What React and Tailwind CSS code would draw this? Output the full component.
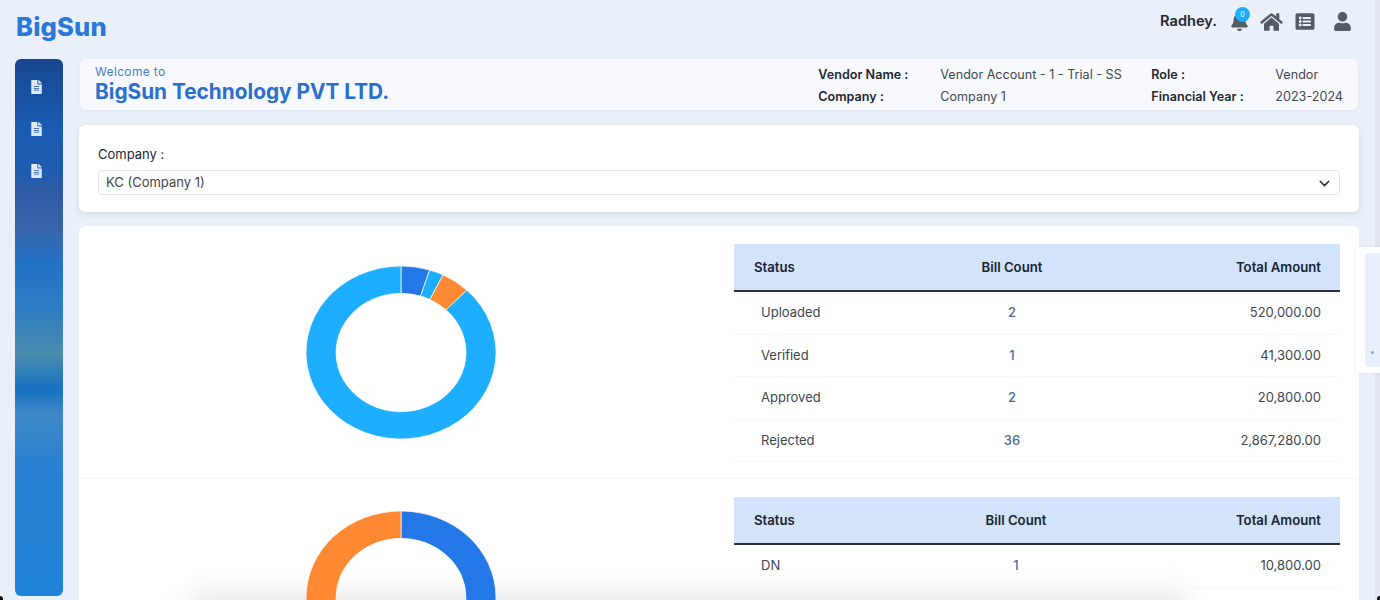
import React from 'react';
import { FaBell, FaHome, FaListAlt, FaUser, FaFileAlt } from 'react-icons/fa';
import { FiChevronDown } from 'react-icons/fi';

const arc = (start, end) => {
  const pt = (r, a) => {
    const t = (a * Math.PI) / 180;
    return `${(100 + r * Math.sin(t)).toFixed(2)} ${(100 - r * Math.cos(t)).toFixed(2)}`;
  };
  const large = end - start > 180 ? 1 : 0;
  return `M${pt(100, start)} A100 100 0 ${large} 1 ${pt(100, end)} L${pt(68.4, end)} A68.4 68.4 0 ${large} 0 ${pt(68.4, start)} Z`;
};

const Donut = ({ segments, className }) => (
  <svg viewBox="0 0 200 200" preserveAspectRatio="none" className={className}>
    {segments.map((s, i) => (
      <path key={i} d={arc(s[0], s[1])} fill={s[2]} stroke="#ffffff" strokeWidth="0.8" />
    ))}
  </svg>
);

const StatusTable = ({ rows, countWidth }) => (
  <div className="relative w-[606px] shrink-0">
    <div className="h-12 flex items-center pt-px bg-[#d2e3fb] border-b-2 border-[#2b3038] text-[13.2px] font-semibold text-[#1b2430]">
      <div className="w-[196px] pl-5">Status</div>
      <div className={`${countWidth} text-center`}>Bill Count</div>
      <div className="flex-1 text-right pr-[19px]">Total Amount</div>
    </div>
    {rows.map((r) => (
      <div key={r[0]} className="h-[42.5px] flex items-center border-b border-[#f5f6f8] text-[13px] text-[#41464d]">
        <div className="w-[196px] pl-[27px]">{r[0]}</div>
        <div className={`${countWidth} text-center font-medium text-[#4a6a9c]`}>{r[1]}</div>
        <div className="flex-1 text-right pr-[19px]">{r[2]}</div>
      </div>
    ))}
  </div>
);

const Info = ({ label, value, labelWidth }) => (
  <div className="flex text-[12.6px] leading-[22px]">
    <div className={`${labelWidth} font-semibold text-[#23272e]`}>{label}</div>
    <div className="text-[#43474e]">{value}</div>
  </div>
);

export default function App() {
  return (
    <div className="relative h-screen overflow-hidden bg-[#eaf0f9] font-['Inter',sans-serif]">
      <header className="relative h-[59px] flex items-start justify-between pl-4 pr-[28px]">
        <div className="mt-[10px] text-[25.5px] leading-[34px] font-extrabold text-[#2a78d8] tracking-[0.2px]">BigSun</div>
        <div className="mt-[11px] flex items-center text-[#555b64]">
          <span className="text-[14.6px] font-semibold text-[#23272e] mr-[13px]">Radhey.</span>
          <div className="relative mr-[11px]">
            <FaBell className="w-[19px] h-[19px]" />
            <span className="absolute -top-[5px] left-[5px] w-[15px] h-[15px] rounded-full bg-[#1eaeff] text-white text-[7px] flex items-center justify-center">0</span>
          </div>
          <FaHome className="w-[23px] h-[20px] mr-[12px]" />
          <FaListAlt className="w-[20px] h-[19px] mr-[18px]" />
          <FaUser className="w-[19px] h-[19px]" />
        </div>
      </header>

      <div className="flex pl-[15px] pr-[21px] gap-4">
        <aside className="w-12 h-[537px] shrink-0 rounded-md flex flex-col items-center pt-[21px] pr-[6px] gap-[28px] bg-[linear-gradient(180deg,#174690_0%,#1a5ab0_12%,#1d5cb0_20%,#2f5ba4_25%,#3a64a8_31%,#2272c6_38%,#2c7bc4_46%,#4a8cae_55%,#1670c2_61.5%,#3f88c8_66%,#2a80d2_76%,#1f82da_100%)]">
          <FaFileAlt className="w-[11px] h-[14px] text-[#dfe9f7]" />
          <FaFileAlt className="w-[11px] h-[14px] text-[#dfe9f7]" />
          <FaFileAlt className="w-[11px] h-[14px] text-[#dfe9f7]" />
        </aside>

        <main className="flex-1 min-w-0">
          <div className="h-[51px] mx-px rounded-md bg-[#f7f9fe] shadow-[0_1px_2px_rgba(60,80,120,0.08)] flex items-center justify-between pl-[15px] pr-[15px]">
            <div>
              <div className="text-[12px] leading-[13px] tracking-[0.35px] text-[#3f7fd0]">Welcome to</div>
              <div className="mt-[2px] text-[20.8px] leading-[24px] font-bold text-[#2a6fcb]">BigSun Technology PVT LTD.</div>
            </div>
            <div className="flex pt-[2px]">
              <div className="w-[333px]">
                <Info label="Vendor Name :" value="Vendor Account - 1 - Trial - SS" labelWidth="w-[122px]" />
                <Info label="Company :" value="Company 1" labelWidth="w-[122px]" />
              </div>
              <div>
                <Info label="Role :" value="Vendor" labelWidth="w-[124px]" />
                <Info label="Financial Year :" value="2023-2024" labelWidth="w-[124px]" />
              </div>
            </div>
          </div>

          <div className="mt-[15px] h-[87px] rounded-md bg-white shadow-[0_2px_6px_rgba(60,80,120,0.14)] px-[19px] pt-[21px]">
            <div className="text-[13px] leading-4 text-[#23272e]">Company :</div>
            <div className="mt-2 h-[25px] pt-px rounded border border-[#e1e4ea] flex items-center justify-between pl-[7px] pr-[6px] text-[13px] text-[#43474e]">
              <span>KC (Company 1)</span>
              <FiChevronDown className="w-[17px] h-[17px] text-[#2f343b]" />
            </div>
          </div>

          <div className="mt-[14px] h-[252px] rounded-t-md bg-white flex pl-[227px] pr-[19px] pt-[18px]">
            <div className="flex-1 pt-[22px]">
              <Donut
                className="w-[190px] h-[173px]"
                segments={[
                  [0, 17.56, '#2477e6'],
                  [17.56, 26.34, '#1eaeff'],
                  [26.34, 43.9, '#ff8833'],
                  [43.9, 360, '#1eaeff'],
                ]}
              />
            </div>
            <StatusTable
              countWidth="w-[164px]"
              rows={[
                ['Uploaded', '2', '520,000.00'],
                ['Verified', '1', '41,300.00'],
                ['Approved', '2', '20,800.00'],
                ['Rejected', '36', '2,867,280.00'],
              ]}
            />
          </div>

          <div className="h-px bg-[#f4f6fa]" />

          <div className="relative h-[200px] overflow-hidden bg-white flex pl-[227px] pr-[19px] pt-[18px]">
            <div className="absolute left-[110px] top-[116px] w-[1000px] h-[30px] rounded-full bg-[#8a8f98]/25 blur-[14px]" />
            <div className="relative flex-1 pt-[14px]">
              <Donut
                className="w-[190px] h-[173px]"
                segments={[
                  [0, 180, '#2477e6'],
                  [180, 360, '#ff8833'],
                ]}
              />
            </div>
            <StatusTable countWidth="w-[172px]" rows={[['DN', '1', '10,800.00']]} />
          </div>
        </main>
      </div>

      <div className="absolute right-0 top-0 bottom-0 w-[5px] bg-[#dfe4ee]" />
      <div className="absolute right-0 top-[247px] w-[24px] h-[126px] rounded-l bg-white pl-[9px] py-[6px] shadow-[0_0_4px_rgba(60,80,120,0.1)]">
        <div className="relative h-full rounded-l bg-[#e6effb]">
          <span className="absolute left-[6px] top-[98px] w-[3px] h-[3px] rounded-full bg-[#7aa7d8]" />
        </div>
      </div>
      <div className="absolute left-0 bottom-0 w-[3px] h-[4px] rounded-tr-full bg-[#111111]" />
      <div className="absolute right-0 bottom-0 w-[3px] h-[4px] rounded-tl-full bg-[#111111]" />
    </div>
  );
}
